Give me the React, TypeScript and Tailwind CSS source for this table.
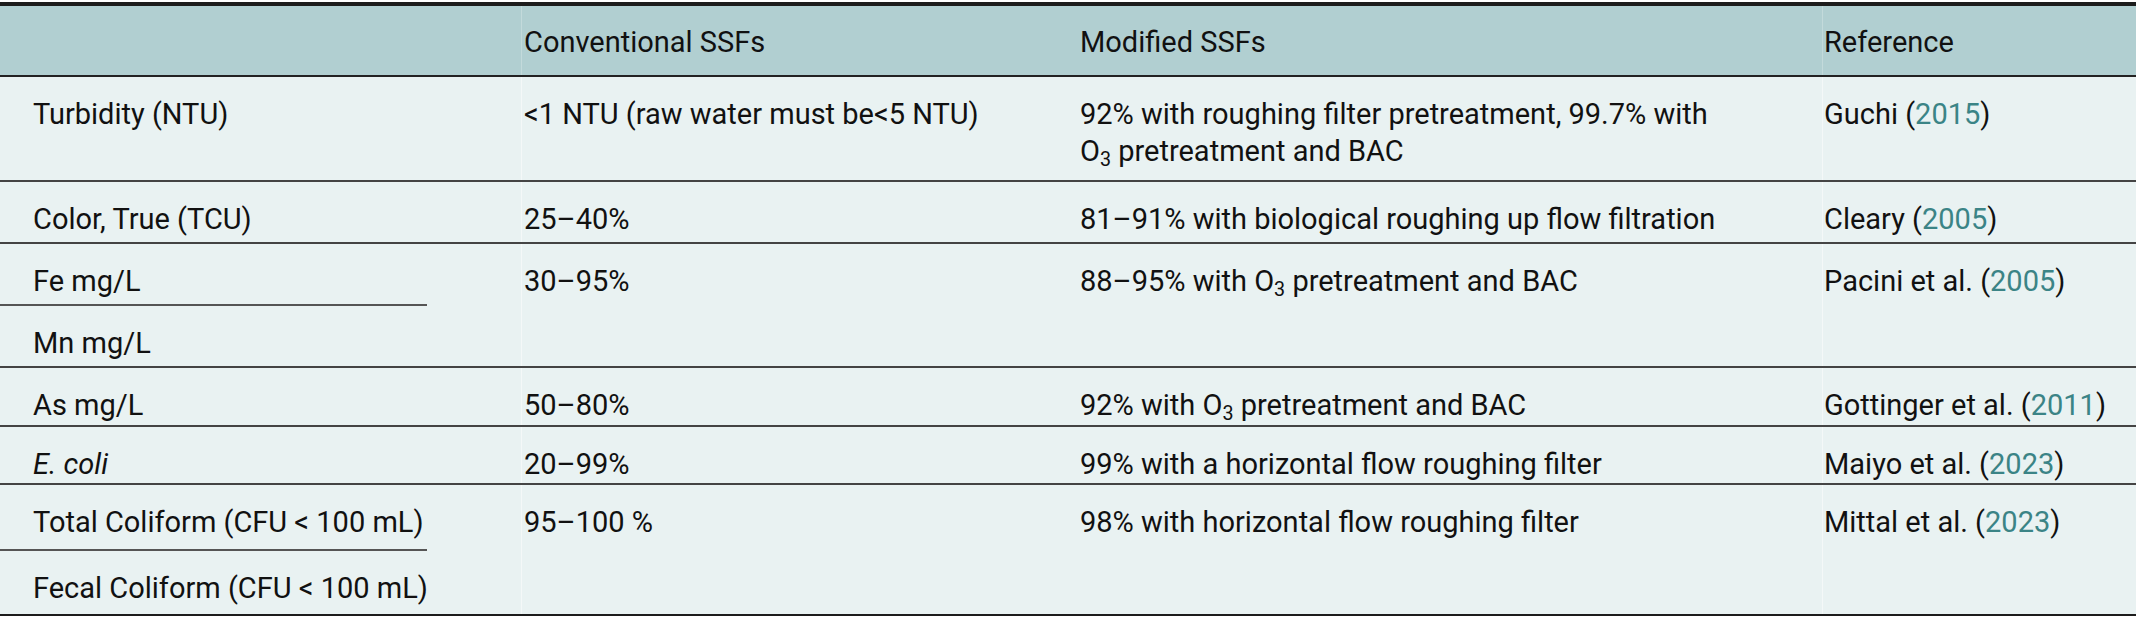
import React from 'react';

const Year: React.FC<{ y: string }> = ({ y }) => <span className="text-[#3b8486]">{y}</span>;

const O3: React.FC = () => (
  <>
    O<sub className="text-[0.68em] leading-none">3</sub>
  </>
);

const Ref: React.FC<{ name: string; year: string }> = ({ name, year }) => (
  <>
    {name} (<Year y={year} />)
  </>
);

type Row = {
  param: React.ReactNode[];
  conv: React.ReactNode;
  mod: React.ReactNode;
  refc: React.ReactNode;
  h: string;
};

const rows: Row[] = [
  {
    param: ['Turbidity (NTU)'],
    conv: '<1 NTU (raw water must be<5 NTU)',
    mod: (
      <>
        92% with roughing filter pretreatment, 99.7% with
        <br />
        <O3 /> pretreatment and BAC
      </>
    ),
    refc: <Ref name="Guchi" year="2015" />,
    h: 'h-[105px]',
  },
  {
    param: ['Color, True (TCU)'],
    conv: '25–40%',
    mod: '81–91% with biological roughing up flow filtration',
    refc: <Ref name="Cleary" year="2005" />,
    h: 'h-[62px]',
  },
  {
    param: ['Fe mg/L', 'Mn mg/L'],
    conv: '30–95%',
    mod: (
      <>
        88–95% with <O3 /> pretreatment and BAC
      </>
    ),
    refc: <Ref name="Pacini et al." year="2005" />,
    h: 'h-[124px]',
  },
  {
    param: ['As mg/L'],
    conv: '50–80%',
    mod: (
      <>
        92% with <O3 /> pretreatment and BAC
      </>
    ),
    refc: <Ref name="Gottinger et al." year="2011" />,
    h: 'h-[59px]',
  },
  {
    param: [<i key="e">E. coli</i>],
    conv: '20–99%',
    mod: '99% with a horizontal flow roughing filter',
    refc: <Ref name="Maiyo et al." year="2023" />,
    h: 'h-[58px]',
  },
  {
    param: ['Total Coliform (CFU < 100 mL)', 'Fecal Coliform (CFU < 100 mL)'],
    conv: '95–100 %',
    mod: '98% with horizontal flow roughing filter',
    refc: <Ref name="Mittal et al." year="2023" />,
    h: 'h-[129px]',
  },
];

const App: React.FC = () => {
  return (
    <div className="w-[2139px] h-[619px] bg-white pt-[2px] font-['Roboto',sans-serif] text-[29px] leading-[37px] text-[#111]">
      <div className="w-[2136px] border-t-[4px] border-b-2 border-[#1c1c1c] bg-[#e9f2f2]">
        {/* header */}
        <div className="flex h-[71px] items-center bg-[#b1cfd1] border-b-2 border-[#222]">
          <div className="w-[521px] h-full" />
          <div className="w-[557px] h-full flex items-center pt-[3px] pl-[2px] border-l border-[#c3dadb]">
            Conventional SSFs
          </div>
          <div className="w-[744px] h-full flex items-center pt-[3px] pl-[2px]">Modified SSFs</div>
          <div className="flex-1 h-full flex items-center pt-[3px] pl-[1px] border-l border-[#c3dadb]">
            Reference
          </div>
        </div>

        {rows.map((r, i) => (
          <div
            key={i}
            className={`flex ${r.h} ${i < rows.length - 1 ? 'border-b-2 border-[#444]' : ''}`}
          >
            <div className="w-[521px] flex flex-col">
              {r.param.map((p, j) => (
                <div
                  key={j}
                  className={`flex-1 pl-[33px] pt-[19px] whitespace-nowrap ${
                    j < r.param.length - 1 ? 'w-[427px] border-b-2 border-[#555]' : ''
                  }`}
                >
                  {p}
                </div>
              ))}
            </div>
            <div className="w-[557px] pl-[2px] pt-[19px] border-l border-[#f4f8f8]">{r.conv}</div>
            <div className="w-[744px] pl-[2px] pt-[19px]">{r.mod}</div>
            <div className="flex-1 pl-[1px] pt-[19px] border-l border-[#f4f8f8] whitespace-nowrap">
              {r.refc}
            </div>
          </div>
        ))}
      </div>
    </div>
  );
};

export default App;
